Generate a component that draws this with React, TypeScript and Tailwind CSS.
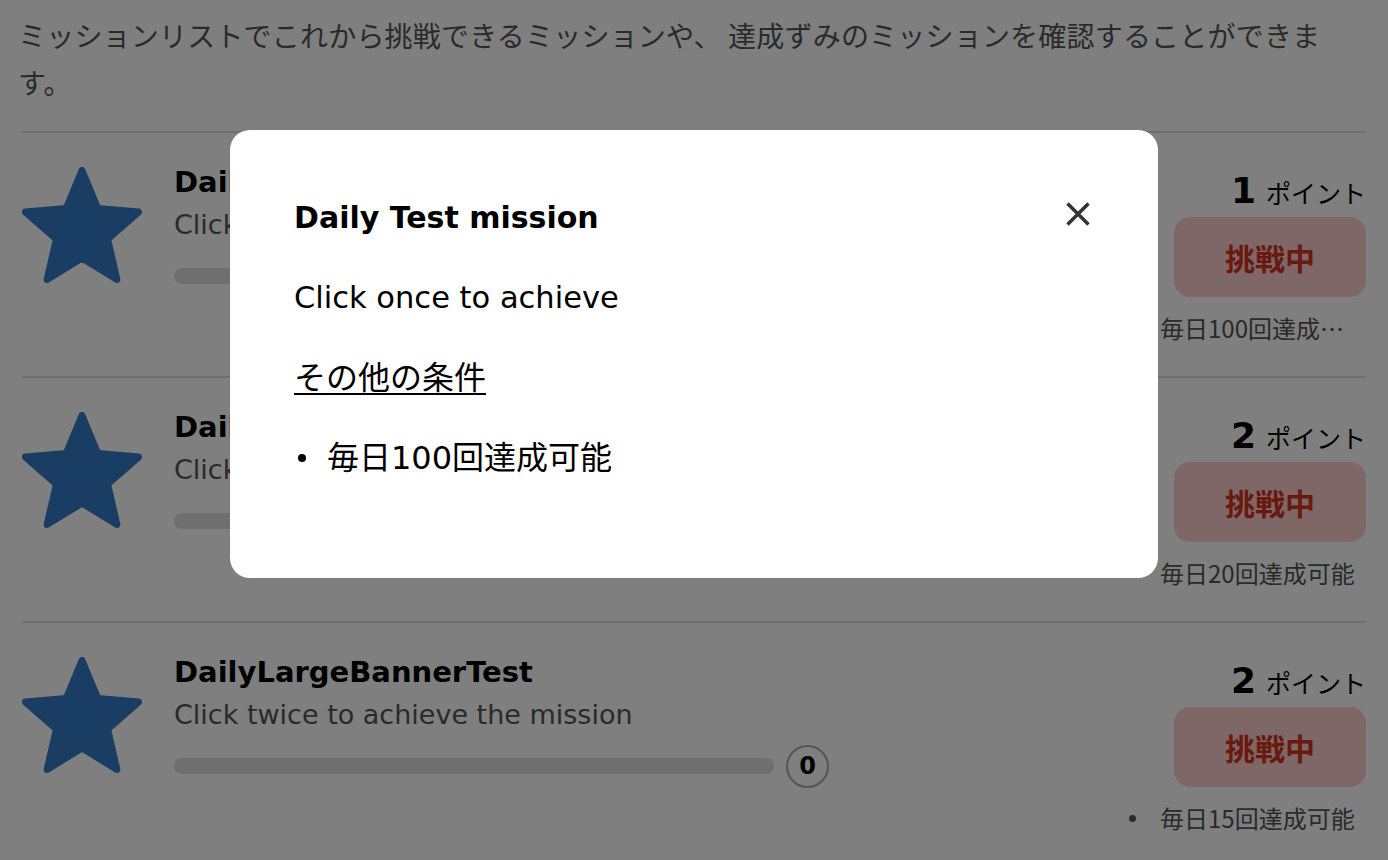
interface Mission {
  title: string;
  description: string;
  points: number;
  condition: string;
  count: number;
}

const missions: Mission[] = [
  { title: 'Daily Test mission', description: 'Click once to achieve', points: 1, condition: '毎日100回達成可能', count: 0 },
  { title: 'DailyBannerTest', description: 'Click once to achieve the mission', points: 2, condition: '毎日20回達成可能', count: 0 },
  { title: 'DailyLargeBannerTest', description: 'Click twice to achieve the mission', points: 2, condition: '毎日15回達成可能', count: 0 },
]

const font = { fontFamily: '"DejaVu Sans", "Noto Sans CJK JP", sans-serif' }
const jpFont = { fontFamily: '"Noto Sans CJK JP", sans-serif' }

function StarIcon() {
  return (
    <svg width="120" height="116" viewBox="1.4 1.4 21.2 20.2" preserveAspectRatio="none" className="shrink-0">
      <path
        d="M12 17.27L18.18 21l-1.64-7.03L22 9.24l-7.19-.61L12 2 9.19 8.63 2 9.24l5.46 4.73L5.82 21z"
        fill="#347ac6"
        stroke="#347ac6"
        strokeWidth="1.2"
        strokeLinejoin="round"
      />
    </svg>
  )
}

function MissionRow({ mission }: { mission: Mission }) {
  return (
    <div className="flex border-t-2 border-[#dedede]">
      <div className="flex flex-1 pt-[34px]">
        <StarIcon />
        <div className="ml-[32px] flex flex-col">
          <p className="mt-[-5px] text-[29px] font-bold leading-[40px] text-black">{mission.title}</p>
          <p className="mt-[5px] text-[27px] leading-[36px] text-[#555]">{mission.description}</p>
          <div className="mt-[11px] flex h-[44px] items-center">
            <div className="h-[16px] w-[600px] rounded-full bg-[#dedede]" />
            <div className="ml-[12px] flex h-[43px] w-[43px] items-center justify-center rounded-full border-2 border-[#aaa] text-[24px] font-bold text-black">
              {mission.count}
            </div>
          </div>
        </div>
      </div>
      <div className="flex flex-col items-end pt-[37px] pb-[30px]">
        <p className="h-[42px] leading-[42px] text-black">
          <span className="text-[36px] font-bold">{mission.points}</span>
          <span className="ml-[10px] text-[25px]" style={jpFont}>ポイント</span>
        </p>
        <button className="mt-[5px] flex h-[80px] w-[192px] items-center justify-center rounded-[16px] bg-[#fecece] text-[30px] font-bold text-[#d0341f]" style={jpFont}>
          挑戦中
        </button>
        <div className="mt-[13px] mr-[8px] flex h-[36px] items-center text-[24px] text-[#555]" style={jpFont}>
          <span className="mr-[24px] h-[7px] w-[7px] shrink-0 rounded-full bg-[#555]" />
          <span className="w-[198px] overflow-hidden text-ellipsis whitespace-nowrap">{mission.condition}</span>
        </div>
      </div>
    </div>
  )
}

export default function App() {
  const active = missions[0]

  return (
    <div className="min-h-[860px] bg-white px-[22px] pt-[12px]" style={font}>
      <p className="-ml-[4px] mb-[25px] max-w-[1330px] text-[28px] leading-[47px] tracking-[0.2px] text-[#555]" style={jpFont}>
        ミッションリストでこれから挑戦できるミッションや、 達成ずみのミッションを確認することができます。
      </p>

      {missions.map((m) => (
        <MissionRow key={m.title} mission={m} />
      ))}

      <div className="fixed inset-0 flex justify-center bg-black/50 pt-[130px]">
        <div className="h-[448px] w-[928px] rounded-[20px] bg-white pl-[64px] pr-[68px] pt-[68px]">
          <div className="flex items-start justify-between">
            <h2 className="text-[30px] font-bold leading-[40px] text-black">{active.title}</h2>
            <button className="mt-[4px] text-[#333]">
              <svg width="24" height="24" viewBox="0 0 24 24" className="block">
                <path d="M1.5 1.5L22.5 22.5M22.5 1.5L1.5 22.5" stroke="currentColor" strokeWidth="3.5" />
              </svg>
            </button>
          </div>
          <p className="mt-[38px] text-[30.5px] leading-[44px] text-black">{active.description}</p>
          <p className="mt-[36px] text-[32px] leading-[44px] text-black underline decoration-2 underline-offset-[4px]">その他の条件</p>
          <ul className="mt-[36px] text-[32px] leading-[44px] text-black">
            <li className="flex items-center">
              <span className="ml-[4px] mr-[21px] h-[8px] w-[8px] rounded-full bg-black" />
              {active.condition}
            </li>
          </ul>
        </div>
      </div>
    </div>
  )
}
